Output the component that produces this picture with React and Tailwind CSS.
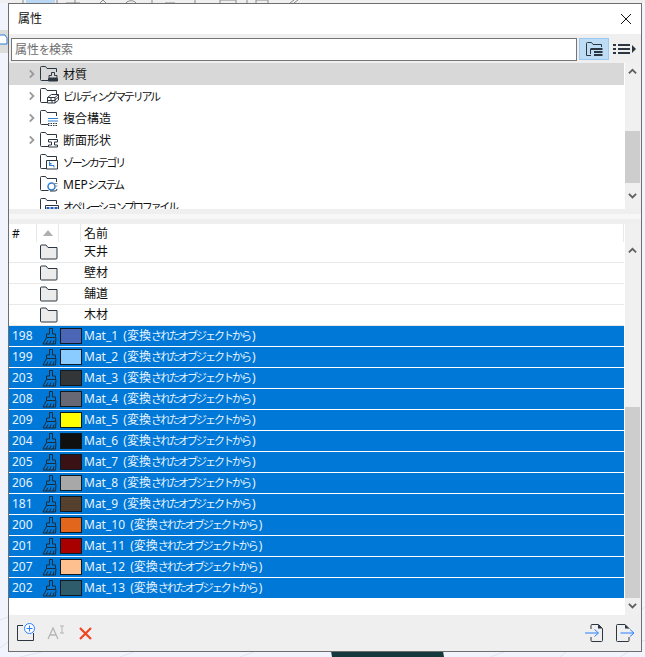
const ink = '#2c3640';

const treeItems = [
  { name: '材質', arrow: true, selected: true, icon: 'brush' },
  { name: 'ビルディングマテリアル', arrow: true, icon: 'brick' },
  { name: '複合構造', arrow: true, icon: 'layers' },
  { name: '断面形状', arrow: true, icon: 'beam' },
  { name: 'ゾーンカテゴリ', icon: 'zone' },
  { name: 'MEPシステム', icon: 'mep' },
  { name: 'オペレーションプロファイル', icon: 'grid' },
];

const folders = ['天井', '壁材', '舗道', '木材'];

const materials = [
  { id: 198, name: 'Mat_1', color: 'bg-[#4a66b4]' },
  { id: 199, name: 'Mat_2', color: 'bg-[#8accff]' },
  { id: 203, name: 'Mat_3', color: 'bg-[#333638]' },
  { id: 208, name: 'Mat_4', color: 'bg-[#686874]' },
  { id: 209, name: 'Mat_5', color: 'bg-[#ffff00]' },
  { id: 204, name: 'Mat_6', color: 'bg-[#101010]' },
  { id: 205, name: 'Mat_7', color: 'bg-[#3a1216]' },
  { id: 206, name: 'Mat_8', color: 'bg-[#a8a8a8]' },
  { id: 181, name: 'Mat_9', color: 'bg-[#54402c]' },
  { id: 200, name: 'Mat_10', color: 'bg-[#e2661c]' },
  { id: 201, name: 'Mat_11', color: 'bg-[#a80000]' },
  { id: 207, name: 'Mat_12', color: 'bg-[#ffc090]' },
  { id: 202, name: 'Mat_13', color: 'bg-[#2e5c6a]' },
];

// the dialog's UI font has narrow kana, so kana runs get tightened
const Ja = ({ text, kana = 'text-[11px] tracking-[-2.2px]' }) => (
  <>
    {text.split(/([\u3040-\u30ff]+)/).map((part, i) =>
      i % 2 ? (
        <span key={i} className={kana}>{part}</span>
      ) : (
        <span key={i}>{part}</span>
      )
    )}
  </>
);

const TreeIcon = ({ type }) => (
  <svg width="22" height="20" viewBox="0 0 22 20" fill="none" stroke={ink} strokeWidth="1" className="shrink-0">
    <path d="M8.500 16.500H1.500a1 1 0 0 1-1-1V3.500a1 1 0 0 1 1-1h4l1.500 2H16.500V8" />
    {type === 'brush' && (
      <g>
        <path d="M11.500 8.500h3v3h2.500v2.500h-8v-2.500h2.500z" />
        <path d="M8.500 14.500h9v2.500h-9z" fill={ink} />
      </g>
    )}
    {type === 'brick' && (
      <g>
        <path d="M7.500 11.500l4-3h7v5.500l-3.500 3h-7.500z" fill="#fff" />
        <path d="M7.500 11.500h7.500l3.500-3M15 11.500v5.500M7.500 14.500h7.500M11 11.500v3M12 14.500v2.500M15 14l3.500-3" />
      </g>
    )}
    {type === 'layers' && (
      <g>
        <path d="M8 10.500h10M8 13h10" stroke="#2a7fd6" />
        <path d="M8 15.500h10M8 17.500h10" strokeDasharray="1.500 1" />
      </g>
    )}
    {type === 'beam' && <path d="M8.500 9.500h9v2.500h-3v3h3v2h-9v-2h3v-3h-3z" />}
    {type === 'zone' && (
      <g>
        <path d="M6.500 8.500h11v8.500h-11z" fill="#fff" />
        <path d="M9.500 9.500v4h4.500v2" stroke="#2a7fd6" />
        <path d="M9 11.500h2.500M9 13h2.500" stroke="#2a7fd6" />
      </g>
    )}
    {type === 'mep' && (
      <g>
        <circle cx="11.500" cy="12.500" r="3.500" stroke="#2a7fd6" strokeWidth="1.500" />
        <path d="M13 9.500h4.500M14 12h3.500" stroke="#8a8f95" />
        <path d="M10 17h5a2 2 0 0 0 2-2" />
      </g>
    )}
    {type === 'grid' && (
      <g>
        <path d="M5.500 9.500h13v8h-13z" fill="#fff" />
        <path d="M6.500 11h11v5h-11z" fill="#1f5fb4" stroke="none" />
        <path d="M10 11v6M14 11v6M6 13.500h12" stroke="#fff" />
      </g>
    )}
  </svg>
);

const Chevron = ({ dir = 'right', className = '' }) => {
  const d = { right: 'M2 1l4 4-4 4', up: 'M1 6l4-4 4 4', down: 'M1 2l4 4 4-4' }[dir];
  return (
    <svg width="10" height="10" viewBox="0 0 10 10" fill="none" stroke="currentColor" strokeWidth="2" className={className}>
      <path d={d} />
    </svg>
  );
};

const FolderIcon = () => (
  <svg width="18" height="16" viewBox="0 0 18 16" className="shrink-0">
    <path d="M.5 14V2a1 1 0 0 1 1-1h4.500l2 2.500h9v10.500a1 1 0 0 1-1 1h-14.500a1 1 0 0 1-1-1z" fill="#ececec" stroke={ink} />
  </svg>
);

const BrushIcon = () => (
  <svg width="16" height="17" viewBox="0 0 16 17" fill="none" stroke="#1f2a35" strokeWidth="1" className="shrink-0">
    <path d="M7.500 .5h3v5.500h3v3.500H4.500V6h3z" />
    <path d="M4.500 9.500L1 16h12.500l.5-6.500M4 16l2-3.500M7.500 16l1.500-3.500M11 16l1-3.500" />
  </svg>
);

const DocIcon = ({ children, className = '' }) => (
  <svg width="20" height="20" viewBox="0 0 20 20" fill="none" className={className}>
    {children}
  </svg>
);

const Scrollbar = ({ top, thumb, bottom, upPad }) => (
  <div className="w-[15px] shrink-0 flex flex-col items-stretch bg-[#f0f0f0] text-[#5f5f5f]">
    <div className="flex justify-center" style={{ height: top, paddingTop: upPad }}>
      <Chevron dir="up" className="w-[9px] h-[9px]" />
    </div>
    <div className="bg-[#cdcdcd]" style={{ height: thumb }} />
    <div className="flex justify-center items-center" style={{ height: bottom }}>
      <Chevron dir="down" className="w-[9px] h-[9px]" />
    </div>
  </div>
);

export default function App() {
  return (
    <div
      className="relative w-[645px] h-[657px] overflow-hidden bg-[#f1f4fc] text-[12px] text-[#111]"
      style={{ fontFamily: '"Noto Sans", "Noto Sans CJK JP", sans-serif' }}
    >
      {/* app behind the dialog */}
      <svg width="645" height="657" className="absolute inset-0" fill="none">
        <path d="M0 3V0h645v3z" fill="#efefef" />
        <path d="M26 3V0h29v3z" fill="#b9d7f2" />
        <path d="M0 30h8v23H0z" fill="#dcdcdc" />
        <path d="M0 35h5l2 3v6H0" stroke="#2a7fd6" fill="#fff" />
        <path d="M0 648l8-6M0 620l8-3M641 610l4-3M641 640l4 1M20 657l22-5M120 657l14-5M240 657l14-5M490 657l14-5M560 657l6-5M620 657l8-5" stroke="#dde3f2" />
        <path d="M331 651h112l1 6H332z" fill="#16393e" />
        <path d="M23 3V0M57 3V0M152 3V0M247 3V0M66 3h14M75 3V0M100 3l3-3 3 3M126 3c2-3 8-3 10 0M165 3h10M195 3V0M220 3V0h16v3M256 3V0h12v3M290 3l4-3M294 3l4-3" stroke="#8a8a8a" />
      </svg>

      <div className="pl-2 pt-[3px]">
        <div className="relative w-[634px] h-[649px] flex flex-col border border-[#6e6e6e] bg-[#efefef]">
          {/* title bar */}
          <div className="h-[30px] shrink-0 bg-white flex items-center justify-between pl-[9px] pr-[9px]">
            <span>属性</span>
            <svg width="12" height="12" viewBox="0 0 12 12" stroke="#111" strokeWidth="1">
              <path d="M1 1l10 10M11 1L1 11" />
            </svg>
          </div>

          {/* search */}
          <div className="h-[29px] shrink-0 flex items-start pt-1 pl-[2px]">
            <div className="w-[566px] h-[23px] flex items-center bg-white border border-[#767676] pl-[3px] text-[#6d6d6d] leading-none">
              <Ja text="属性を検索" kana="text-[11px] tracking-[-1px]" />
            </div>
            <div className="ml-[2px] w-[30px] h-[22px] flex items-center justify-center bg-[#bfdcf5] border border-[#99c9f2]">
              <svg width="18" height="16" viewBox="0 0 18 16" fill="none" stroke={ink}>
                <path d="M6 14.500H1.500V2.500a1 1 0 0 1 1-1h4l1.500 2h8.500V6" />
                <path d="M5.500 8h12M9 11h8.500M9 14h8.500" strokeWidth="2" />
                <path d="M5.500 8v5" />
              </svg>
            </div>
            <svg width="23" height="12" viewBox="0 0 23 12" fill={ink} className="ml-1 mt-[5px]">
              <path d="M0 1h3v2H0zM5 1h12v2H5zM0 5h3v2H0zM5 5h12v2H5zM0 9h3v2H0zM5 9h12v2H5zM19 2l4 4-4 4z" />
            </svg>
          </div>

          {/* attribute tree */}
          <div className="h-[146px] shrink-0 flex">
            <div className="flex-1 bg-white overflow-hidden">
              {treeItems.map((item) => (
                <div key={item.name} className={`h-[22px] shrink-0 flex items-center pl-[19px] ${item.selected ? 'bg-[#d8d8d8]' : ''}`}>
                  <span className="w-[12px] text-[#9a9a9a]">{item.arrow && <Chevron className="w-[9px] h-[10px]" />}</span>
                  <TreeIcon type={item.icon} />
                  <span className="ml-[1px] pt-[1px] whitespace-nowrap"><Ja text={item.name} /></span>
                </div>
              ))}
            </div>
            <div className="w-px bg-white" />
            <Scrollbar top={68} thumb={52} bottom={26} upPad={5} />
            <div className="w-px" />
          </div>

          {/* splitter */}
          <div className="h-[15px] shrink-0 flex items-center">
            <div className="w-full h-[5px] bg-[#f7f7f7]" />
          </div>

          {/* attribute list */}
          <div className="h-[391px] shrink-0 flex">
            <div className="flex-1 bg-white overflow-hidden flex flex-col">
              <div className="h-[18px] shrink-0 flex items-center leading-none">
                <div className="w-[28px] h-full pl-[3px] pt-[1px] flex items-center border-r border-[#e8e8e8]">#</div>
                <div className="w-[22px] h-full flex items-center justify-center border-r border-[#e8e8e8]">
                  <svg width="10" height="6" viewBox="0 0 10 6" fill="#b0b0b0"><path d="M5 0l5 6H0z" /></svg>
                </div>
                <div className="w-[22px] h-full border-r border-[#e8e8e8]" />
                <div className="flex-1 h-full pl-[3px] pt-[1px] flex items-center border-r border-[#e8e8e8]">名前</div>
              </div>
              {folders.map((name) => (
                <div key={name} className="h-[21px] shrink-0 flex items-center border-b border-[#e9e9e9]">
                  <div className="w-[31px]" />
                  <FolderIcon />
                  <span className="ml-[26px]">{name}</span>
                </div>
              ))}
              {materials.map((m) => (
                <div key={m.id} className="h-[21px] shrink-0 flex items-center border-b border-white bg-[#0078d7] text-[#e6f3ff]">
                  <span className="w-[33px] pl-[3px]">{m.id}</span>
                  <BrushIcon />
                  <div className={`ml-[2px] w-[22px] h-[16px] border border-[#101820] ${m.color}`} />
                  <span className="ml-[2px] whitespace-nowrap">
                    {m.name} <span className="ml-[2px]">(</span>
                    <Ja text="変換されたオブジェクトから" kana="text-[11px] tracking-[-2px]" />
                    <span className="ml-[2px]">)</span>
                  </span>
                </div>
              ))}
            </div>
            <div className="w-px bg-white" />
            <Scrollbar top={183} thumb={191} bottom={17} upPad={23} />
            <div className="w-px" />
          </div>

          {/* bottom toolbar */}
          <div className="flex-1 flex items-center pl-[7px] pr-[6px]">
            <svg width="20" height="20" viewBox="0 0 20 20" fill="none" className="shrink-0">
              <path d="M7 2.500H1.500v15h16V10" stroke={ink} />
              <circle cx="13.500" cy="5.500" r="5" stroke="#2a7fff" fill="#fff" />
              <path d="M10.500 5.500h6M13.500 2.500v6" stroke="#2a7fff" />
            </svg>
            <svg width="18" height="16" viewBox="0 0 18 16" fill="none" stroke="#b5b5b5" strokeWidth="1.300" className="ml-[11px]">
              <path d="M1 14L6 3l5 11M3 10h6" />
              <path d="M13 1h4M15 1v7M13 8h4" strokeWidth="1" />
            </svg>
            <svg width="13" height="13" viewBox="0 0 13 13" stroke="#f0451f" strokeWidth="2.200" className="ml-[14px]">
              <path d="M1 1l11 11M12 1L1 12" />
            </svg>
            <div className="flex-1" />
            <DocIcon>
              <path d="M6 6V2.500a1 1 0 0 1 1-1h6.500l4 4v12a1 1 0 0 1-1 1H7a1 1 0 0 1-1-1V14" stroke={ink} />
              <path d="M13 1.500l4.500 4H13z" fill={ink} />
              <path d="M0 10h13M9.500 6.500l4 3.500-4 3.500" stroke="#2a7fff" />
            </DocIcon>
            <DocIcon className="ml-[10px]">
              <path d="M14 6V5.500l-4-4H2.500a1 1 0 0 0-1 1v15a1 1 0 0 0 1 1H13a1 1 0 0 0 1-1V14" stroke={ink} />
              <path d="M10 1.500l4 4h-4z" fill={ink} />
              <path d="M5.500 10H18M15 6.500l4 3.500-4 3.500" stroke="#2a7fff" />
            </DocIcon>
          </div>
        </div>
      </div>
    </div>
  );
}
